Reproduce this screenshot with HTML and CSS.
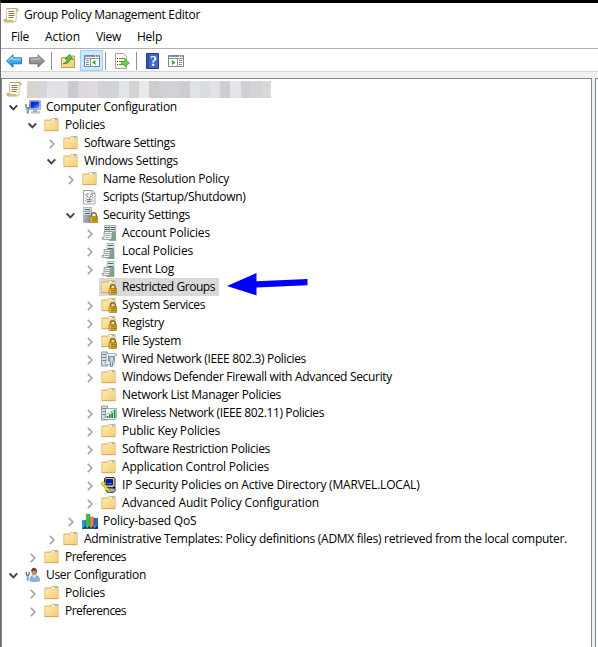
FILE: index.html
```
<!DOCTYPE html>
<html lang="en">
<head>
<meta charset="utf-8">
<title>Group Policy Management Editor</title>
<link rel="stylesheet" href="styles.css">
</head>
<body>
<svg class="defs" width="0" height="0" aria-hidden="true">
  <defs>
    <linearGradient id="gold" x1="0" y1="0" x2="1" y2="1"><stop offset="0" stop-color="#ffe9ac"/><stop offset="1" stop-color="#f3cd78"/></linearGradient>
    <linearGradient id="steel" x1="0" y1="0" x2="1" y2="1"><stop offset="0" stop-color="#c5d2da"/><stop offset="1" stop-color="#71818b"/></linearGradient>
    <linearGradient id="screen" x1="0" y1="0" x2="1" y2="1"><stop offset="0" stop-color="#0014b4"/><stop offset=".5" stop-color="#1538e2"/><stop offset="1" stop-color="#8eb4ff"/></linearGradient>
    <linearGradient id="blue" x1="0" y1="0" x2="0" y2="1"><stop offset="0" stop-color="#7ed4fa"/><stop offset="1" stop-color="#1187d8"/></linearGradient>
    <linearGradient id="grey" x1="0" y1="0" x2="0" y2="1"><stop offset="0" stop-color="#b5b5b5"/><stop offset="1" stop-color="#777"/></linearGradient>
    <symbol id="folder" viewBox="0 0 16 16">
      <path d="M.9 13.5V3H7L8 1.5H14.1V13.5Z" fill="#f3d184" stroke="#d9b362" stroke-width=".9"/>
      <path d="M8.3 2H13.6V3.4H7.8z" fill="#fff"/><path d="M10.6 2.2h2.8v1h-2.8z" fill="#4fa3df"/>
      <path d="M1.4 4H7.6L8.6 4.6H13.7V13.2H1.4Z" fill="url(#gold)"/><path d="M.6 13.7h13.9" stroke="#cda34f" stroke-width=".8"/>
    </symbol>
    <symbol id="padlock" viewBox="0 0 16 16">
      <path d="M9.5 10V8.2a2.4 2.4 0 0 1 4.8 0V10" fill="none" stroke="#806a2c" stroke-width="1.5"/>
      <rect x="8" y="9.5" width="8" height="6" rx=".6" fill="#d5a31d" stroke="#96700e" stroke-width=".6"/>
      <path d="M8.5 11.3h7M8.5 13.4h7" stroke="#8b6b19" stroke-width=".8"/><path d="M9.2 10v5" stroke="#f9dc72" stroke-width=".8"/>
    </symbol>
    <symbol id="locked" viewBox="0 0 16 16"><use href="#folder"/><use href="#padlock"/></symbol>
    <symbol id="scroll" viewBox="0 0 16 16">
      <path d="M4 1.5H14.2Q15.5 2 15 4H13V12.5Q13 15 10.5 15H2Q.5 14.5 1 12.5H3.5Z" fill="#f6edcd" stroke="#a69365" stroke-width=".8"/>
      <path d="M3.8 2V12.5H10.5Q10.5 15 12 14.3Q13 13.5 12.7 11V3Z" fill="#fffae8"/>
      <path d="M5.5 4.5h6M5.5 6.5h6M5.5 8.5h6M5.5 10.5h5" stroke="#857d68" stroke-width="1"/>
      <path d="M1.2 13h8.5q0 1.5 1.2 2H2q-1-.5-.8-2zM13 3.9h2q.3-2-1.5-2.3z" fill="#d7b777"/>
    </symbol>
    <symbol id="tower" viewBox="0 0 16 16">
      <path d="M.5 .5h8v15h-8z" fill="url(#steel)" stroke="#899aa4" stroke-width=".6"/>
      <path d="M1 1h7v3H1zM1 5h7v3H1z" fill="#dbe5e8"/><path d="M2 2.5h5M2 6.5h5" stroke="#4d606b"/><path d="M1 4.3h7M1 8.3h7" stroke="#8799a3" stroke-width=".7"/>
    </symbol>
    <symbol id="security" viewBox="0 0 16 16"><use href="#tower" x="1"/><use href="#padlock"/></symbol>
    <symbol id="server" viewBox="0 0 16 16">
      <path d="M6 .5h7v15H6z" fill="url(#steel)" stroke="#7b8d96" stroke-width=".6"/>
      <path d="M6.3 1h6.4v5H6.3z" fill="#dce5e7"/><path d="M7 2.5h5M7 5.5h5" stroke="#506068"/>
      <path d="M3.2 6.5h6q1 .2.7 1.6h-1v5q0 1.5-1.4 1.5H2q-1.3-.4-1-2h2z" fill="#f4f5f2" stroke="#777f81" stroke-width=".8"/>
      <path d="M4 8.5h4M4 10.5h4M4 12.5h4" stroke="#878e8f" stroke-width=".8"/>
      <path d="M10.5 12.4h2v2h-2z" fill="#48dc26"/>
    </symbol>
    <symbol id="servers" viewBox="0 0 16 16">
      <path d="M3.5 .5h5v8h-5z" fill="#dbe4e7" stroke="#81939b" stroke-width=".6"/><path d="M4 2.5h4M4 4.5h4" stroke="#506068"/>
      <path d="M8.5 .5h6.2v15H8.5z" fill="url(#steel)" stroke="#7b8d96" stroke-width=".6"/><path d="M8.9 1h5.4v5H8.9z" fill="#dce5e7"/><path d="M9.5 2.5h4.5M9.5 4.5h4.5" stroke="#506068"/>
      <path d="M3.2 6.5h8q1 .2.7 1.6h-1v5q0 1.5-1.4 1.5H2q-1.3-.4-1-2h2z" fill="#f4f5f2" stroke="#777f81" stroke-width=".8"/><path d="M4.5 8.5h5M4.5 10.5h5M4.5 12.5h4" stroke="#878e8f" stroke-width=".8"/><path d="M12.3 12.4h2v2h-2z" fill="#48dc26"/>
    </symbol>
    <symbol id="script" viewBox="0 0 16 16">
      <path d="M1.5 1.5h9l2.5 2.5v11H1.5z" fill="#fbfcff" stroke="#a0a4ad"/><path d="M10 1.5v3h3" fill="none" stroke="#9298a5"/>
      <path d="M4.5 5q-2 1 0 2M10 5.5q2 .8 0 1.6M4.5 10.5q-2 1 0 2M10 10.5q2 1 0 2" fill="none" stroke="#545a67" stroke-width=".8"/><path d="M5 5h1.5M8 5.2h1.5M5 7.5h1.2M8.2 7.5h1.3M3.5 9h1M6.5 9h2M10.3 9h1M5 10.8h4.5M5 12.7h4.5" stroke="#454b59" stroke-width=".9"/>
    </symbol>
    <symbol id="computer" viewBox="0 0 16 16">
      <path d="M4.5 1.5h11v9h-11z" fill="#d9dfe8" stroke="#a8b1c0"/><path d="M5.5 2.5h9v7h-9z" fill="url(#screen)"/>
      <path d="M8 11h4v2H8z" fill="#a9aeb2"/><path d="M6.5 12.7h8.5v1.5H6.5z" fill="#d2d6d8" stroke="#929899" stroke-width=".5"/>
      <path d="M.9 5v3l1.8 1.5L4.6 8V5" fill="none" stroke="#678496" stroke-width="1.5"/><path d="M2.7 8.8v5.6" stroke="#568294" stroke-width="2.2"/><path d="M2.2 9.8v4" stroke="#c5e7ee" stroke-width=".7"/>
    </symbol>
    <symbol id="user" viewBox="0 0 16 16">
      <path d="M5 14v-2.5Q5.4 9 8 8h2.5Q14 9 14.5 12v2q-5 1.4-9.5 0z" fill="#83b6e2" stroke="#5f88aa" stroke-width=".5"/><path d="m7.3 8 2 3 2-3z" fill="#fff"/>
      <ellipse cx="9" cy="5" rx="2.5" ry="3.5" fill="#c98f62"/><path d="M6.2 4.6Q6.1 1 9.2.8q3.4.5 2.6 4.8l-1 1V3.6Q8.5 4.3 6.2 4.6z" fill="#654834"/>
      <path d="M1.3 5v2.5L2.7 9l1.4-1.5V5" fill="none" stroke="#56758c" stroke-width="1.3"/><path d="M2.7 8.5v5" stroke="#527f98" stroke-width="1.8"/><path d="M2.4 9v3.7" stroke="#bddde9" stroke-width=".6"/>
    </symbol>
    <symbol id="wired" viewBox="0 0 16 16">
      <path d="M.5 1h6v14h-6z" fill="#d6e0e5" stroke="#879ba6"/><path d="M1.5 3.5h4M1.5 6.5h4M1.5 9.5h4" stroke="#657d89"/>
      <path d="M5 2.5h9q2-.2 1.5 2.2h-2v7q0 2-2 2H4.5q-1.2-.5-.5-2h1.3z" fill="#f5f7f8" stroke="#8d989e" stroke-width=".8"/>
      <path d="M7.5 4.5v6M7 5h2.5" stroke="#8398a3"/><path d="M9.5 5.5h3.3v4.2l-1.1 1.2v4.4H9.3v-4.2L8.5 10V7z" fill="#bcdcf0" stroke="#5c6d77" stroke-width=".8"/>
    </symbol>
    <symbol id="wireless" viewBox="0 0 16 16">
      <path d="M.5 1h6v14h-6z" fill="#d9e2e6" stroke="#879ba6"/><path d="M1.5 3.5h4M1.5 6.5h4M1.5 9.5h4" stroke="#657d89"/>
      <path d="M4.5 3.5h11v9q-.3 2-2 2h-10q-1-.6-.3-2h1.3z" fill="#f5f8f6" stroke="#7c898e" stroke-width=".7"/>
      <path d="M6.5 11v2M8.8 9.3V13M11.1 7.5V13M13.6 5V13" stroke="#168b48" stroke-width="1.7"/><path d="m5 10 9.5-6" stroke="#6caf86" stroke-width=".7"/>
    </symbol>
    <symbol id="ipsec" viewBox="0 0 16 16">
      <path d="M3.5 1.5 5 .5h8l1 1.2v8L12 10.5H3.5z" fill="#c0c0c0" stroke="#292929"/><path d="M5 2.5h6.5v5.4H5z" fill="#1019a0" stroke="#000" stroke-width=".7"/><path d="M5.5 6.5H11" stroke="#178ad1"/>
      <path d="M5 11h8.5l1 2.3-1.5 2H6z" fill="#aaa" stroke="#444"/><path d="M12 10h2.5v1.4H12z" fill="#000"/>
      <circle cx="2.2" cy="6.6" r="1.8" fill="#ffee23" stroke="#8e8500" stroke-width=".6"/><path d="m3 7.5 6.2 6-1.2 1.2-2.3-2-1.2.9-1-1 1-.9-2.8-3z" fill="#ffef21" stroke="#898000" stroke-width=".5"/>
    </symbol>
    <symbol id="qos" viewBox="0 0 16 16">
      <path d="M.3 7.5H4v8H.3z" fill="#1295e8" stroke="#08599c" stroke-width=".5"/><path d="M4.3 1.2H8v14.3H4.3z" fill="#31c747" stroke="#118125" stroke-width=".5"/><path d="M8.3 4.2h3.5v11.3H8.3z" fill="#f47b55" stroke="#b84225" stroke-width=".5"/><path d="M12.1 5.5h3.7v10h-3.7z" fill="#1977ca" stroke="#0a2944" stroke-width=".6"/>
      <path d="M0 13.6h16v2H0z" fill="#04182a" opacity=".8"/><path d="M1 12.5V15M5.2 12.5V15M9 12.5V15M12.8 12.5V15" stroke="#77e7ff" stroke-width=".8"/>
    </symbol>
    <symbol id="closed" viewBox="0 0 10 10"><path d="m2.8.9 4 4.1-4 4.1" fill="none" stroke="#a6a6a6" stroke-width="1.7"/></symbol>
    <symbol id="open" viewBox="0 0 10 10"><path d="m.6 2.4 3.8 3.9 3.8-3.9" fill="none" stroke="#404040" stroke-width="1.9"/></symbol>
  </defs>
</svg>

<div class="window">
  <header class="titlebar"><svg class="icon"><use href="#scroll"/></svg><span class="label" data-width="176">Group Policy Management Editor</span></header>
  <nav class="menu"><span class="label" data-width="18">File</span><span class="label" data-width="35">Action</span><span class="label" data-width="25">View</span><span class="label" data-width="25">Help</span></nav>
  <div class="toolbar">
    <svg class="tool" viewBox="0 0 16 16"><path d="M.5 8 7 1.8v3h8.5v6H7v3.4z" fill="url(#blue)" stroke="#1570ad" stroke-width=".9"/><path d="M2.3 7.7 6 4.2v1.9h8.5" fill="none" stroke="#b3eaff" stroke-width=".8"/></svg>
    <svg class="tool forward" viewBox="0 0 16 16"><path d="M15.5 8 9 1.8v3H.5v6H9v3.4z" fill="url(#grey)" stroke="#686868" stroke-width=".9"/><path d="M1.5 6.1h8.5V4.2" fill="none" stroke="#d4d4d4" stroke-width=".8"/></svg>
    <i class="separator"></i>
    <svg class="tool up" viewBox="0 0 16 16"><path d="M1.5 14.5v-10h5L8 3h6.5v11.5z" fill="url(#gold)" stroke="#bd9851"/><path d="M3 10.8Q7.2 10 7.5 5.5L5 6l4.5-4.8L13 6.5l-2.8-.6Q9.7 11 3 10.8z" fill="#56cb3c" stroke="#268119" stroke-width=".7"/></svg>
    <span class="pressed"><svg class="tool" viewBox="0 0 16 16"><path d="M.5 2.5h15v11H.5z" fill="#fff" stroke="#7c858d"/><path d="M1 3.5h14M1 5.5h14" stroke="#8b949c"/><path d="M11 3h1M13 3h1" stroke="#fff"/><path d="M6.5 6v7.5" stroke="#83909a"/><path d="M2 7.5h3M2 9.5h3M2 11.5h3" stroke="#5b98bd"/><path d="M8 9.5 11.5 7v5z" fill="#32aa2c"/></svg></span>
    <i class="separator near"></i>
    <svg class="tool export" viewBox="0 0 16 16"><path d="M1.5.5h8l3 3v12h-11z" fill="#fffde9" stroke="#a7a593"/><path d="M5 5.5h6M5 8.5h5M5 11.5h5" stroke="#777"/><path d="M3 5.5h1M3 8.5h1M3 11.5h1" stroke="#333"/><path d="M7.5 8.3h3.3V6L15.5 10l-4.7 4v-2.4H7.5z" fill="#68d149" stroke="#3e9f27" stroke-width=".7"/></svg>
    <i class="separator"></i>
    <svg class="tool help" viewBox="0 0 16 16"><path d="M1.5.5h12v15h-12z" fill="#4267c5" stroke="#22399c"/><path d="M3.2 1v14" stroke="#253b8f"/><text x="8.5" y="13.3" text-anchor="middle">?</text></svg>
    <svg class="tool pane-tool" viewBox="0 0 16 16"><path d="M.5 2.5h15v11H.5z" fill="#fff" stroke="#7c858d"/><path d="M1 3.5h14M1 5.5h14" stroke="#8b949c"/><path d="M11 3h1M13 3h1" stroke="#fff"/><path d="M9.5 6v7.5" stroke="#83909a"/><path d="M11 7.5h3M11 9.5h3M11 11.5h3" stroke="#7b9099"/><path d="M7.5 9.5 4 7v5z" fill="#32aa2c"/></svg>
  </div>
  <main class="workspace">
    <div class="tree" id="tree">
      <div class="root"><svg class="icon"><use href="#scroll"/></svg><div class="redacted" id="redacted"></div></div>
    </div>
    <div class="side"></div>
  </main>
  <svg class="arrow" viewBox="0 0 82 24"><path d="M0 13 29.5 0V8.2L80.5 6V12.3L29.5 14.4V22.4Z" fill="#00f"/></svg>
</div>
<script src="tree.js"></script>
</body>
</html>
```
FILE: styles.css
```
* { box-sizing: border-box; }
body { margin: 0; overflow: hidden; background: #fff; color: #000; font: 12px/18px "Open Sans", "Noto Sans", sans-serif; }
.defs { position: absolute; }
.window { position: relative; display: flex; flex-direction: column; width: 598px; height: 647px; border-top: 3px solid #000; border-left: 1px solid #6c6c70; }
.icon { width: 16px; height: 16px; flex: none; }
.label { white-space: nowrap; display: inline-block; }
.titlebar { display: flex; height: 24px; align-items: center; gap: 5px; padding-left: 2px; }
.menu { display: flex; height: 22px; gap: 16px; padding: 1px 0 0 10px; border-bottom: 1px solid #b0b0b0; }
.toolbar { display: flex; height: 23px; align-items: center; padding: 1px 0 0 5px; border-bottom: 1px solid #d5d5d5; }
.tool { width: 16px; height: 16px; flex: none; }
.forward { margin-left: 7px; }
.separator { width: 1px; height: 18px; margin-left: 6px; background: #929292; }
.near { margin-left: 2px; }
.up { margin-left: 8px; }
.pressed { display: flex; width: 23px; height: 21px; margin-left: 4px; align-items: center; justify-content: center; border: 1px solid #99d1ff; background: #cce8ff; }
.export { margin-left: 8px; }
.help { margin-left: 8px; }
.help text { font: bold 14px "Liberation Serif", serif; fill: #fff; }
.pane-tool { margin-left: 7px; }
.workspace { display: flex; flex: 1; gap: 3px; padding-top: 6px; background: #f0f0f0; }
.tree { width: 591px; padding-top: 1px; border: solid #828790; border-width: 1px 1px 0; background: #fff; }
.side { flex: 1; border: solid #828790; border-width: 1px 0 0 1px; background: #fff; }
.root { display: flex; height: 18px; align-items: center; padding-left: 4px; gap: 5px; }
.redacted { display: flex; width: 244px; height: 17px; }
.redacted i { flex: 1; }
.row { display: flex; height: 18px; align-items: center; padding-left: 7px; }
.level-1 { padding-left: 26px; }
.level-2 { padding-left: 45px; }
.level-3 { padding-left: 64px; }
.level-4 { padding-left: 83px; }
.twist { width: 10px; height: 10px; margin: 2px 4px 0 0; flex: none; }
.item { display: flex; height: 18px; align-items: center; gap: 5px; padding: 0 4px 0 2px; }
.selected { background: #d9d9d9; }
.arrow { position: absolute; left: 226px; top: 270px; width: 82px; height: 24px; }
```
FILE: tree.js
```
// level, disclosure state, icon, label, label width
const rows = [
  [0, "open", "computer", "Computer Configuration", 131],
  [1, "open", "folder", "Policies", 40],
  [2, "closed", "folder", "Software Settings", 91],
  [2, "open", "folder", "Windows Settings", 94],
  [3, "closed", "folder", "Name Resolution Policy", 126],
  [3, "", "script", "Scripts (Startup/Shutdown)", 142.5],
  [3, "open", "security", "Security Settings", 87],
  [4, "closed", "servers", "Account Policies", 88],
  [4, "closed", "server", "Local Policies", 71],
  [4, "closed", "server", "Event Log", 52],
  [4, "", "locked", "Restricted Groups", 93],
  [4, "closed", "locked", "System Services", 83],
  [4, "closed", "locked", "Registry", 42],
  [4, "closed", "locked", "File System", 59],
  [4, "closed", "wired", "Wired Network (IEEE 802.3) Policies", 184],
  [4, "closed", "folder", "Windows Defender Firewall with Advanced Security", 270],
  [4, "", "folder", "Network List Manager Policies", 159],
  [4, "closed", "wireless", "Wireless Network (IEEE 802.11) Policies", 202],
  [4, "closed", "folder", "Public Key Policies", 98],
  [4, "closed", "folder", "Software Restriction Policies", 148],
  [4, "closed", "folder", "Application Control Policies", 147],
  [4, "closed", "ipsec", "IP Security Policies on Active Directory (MARVEL.LOCAL)", 297.5],
  [4, "closed", "folder", "Advanced Audit Policy Configuration", 197],
  [3, "closed", "qos", "Policy-based QoS", 93.5],
  [2, "closed", "folder", "Administrative Templates: Policy definitions (ADMX files) retrieved from the local computer.", 483],
  [1, "closed", "folder", "Preferences", 61],
  [0, "open", "user", "User Configuration", 100],
  [1, "closed", "folder", "Policies", 40],
  [1, "closed", "folder", "Preferences", 61]
];
const tree = document.getElementById("tree");
for (const [level, state, icon, text, width] of rows) {
  const selected = text === "Restricted Groups" ? " selected" : "";
  tree.insertAdjacentHTML("beforeend",
    `<div class="row level-${level}"><svg class="twist">${state ? `<use href="#${state}"/>` : ""}</svg>` +
    `<div class="item${selected}"><svg class="icon"><use href="#${icon}"/></svg>` +
    `<span class="label" data-width="${width}">${text}</span></div></div>`);
}
const shades = ["d7d3d1", "d5d4d8", "e0e2e5", "e1e1e4", "cbcacf", "dcd7dc", "dedcde", "d4d2d6", "d0d2d3", "e1e4e8", "d6d2d1", "e6e9e7", "cecccd", "d0d0d5", "d4d1d5", "cccdd0", "e1e2e5", "d9dcdc", "e0e2e6", "cdcfcf", "e6e6ea", "d2cfd3", "d5d3d7", "d9d8d7"];
document.getElementById("redacted").innerHTML = shades.map(c => `<i style="background:#${c}"></i>`).join("");
// Tighten the letter spacing so each label takes its column width.
for (const label of document.querySelectorAll(".label")) {
  const target = Number(label.dataset.width);
  const natural = label.getBoundingClientRect().width;
  label.style.letterSpacing = `${(target - natural) / label.textContent.length}px`;
}
```
